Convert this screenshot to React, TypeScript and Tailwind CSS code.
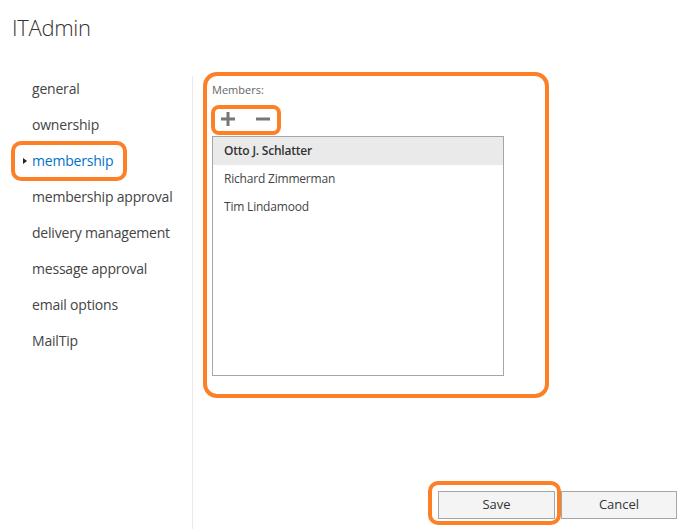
import React from 'react';

const navItems = [
  'general',
  'ownership',
  'membership',
  'membership approval',
  'delivery management',
  'message approval',
  'email options',
  'MailTip',
];

const members = ['Otto J. Schlatter', 'Richard Zimmerman', 'Tim Lindamood'];

const App: React.FC = () => {
  return (
    <div className="relative w-[697px] h-[529px] overflow-hidden bg-white text-[#333] font-['Open_Sans',sans-serif]">
      {/* Title */}
      <h1 className="h-[71px] pl-[12px] pt-[12px] text-[22px] font-light leading-[30px] tracking-[-0.3px] text-[#333]">ITAdmin</h1>

      <div className="flex h-[458px]">
        {/* Left nav */}
        <ul className="w-[192px] pl-[32px]">
          {navItems.map((item) => (
            <li
              key={item}
              className={`relative h-[36px] leading-[36px] text-[14px] tracking-[-0.2px] ${
                item === 'membership' ? 'text-[#0072c6]' : 'text-[#444]'
              }`}
            >
              {item === 'membership' && (
                <span className="absolute left-[-9px] top-[15px] w-0 h-0 border-y-[3.5px] border-y-transparent border-l-[4px] border-l-[#222]" />
              )}
              {item}
            </li>
          ))}
        </ul>

        {/* Right content */}
        <div className="flex-1 flex flex-col border-l border-[#eaeaea] mt-[5px]">
          <div className="pl-[19px] pt-[6px]">
            <div className="text-[11px] leading-[16px] text-[#666]">Members:</div>
            <div className="flex items-center gap-[19px] h-[26px] mt-[8px] pl-[8px]">
              <svg width="16" height="16" viewBox="0 0 16 16">
                <path d="M8 1v14M1 8h14" stroke="#777" strokeWidth="3" />
              </svg>
              <svg width="16" height="16" viewBox="0 0 16 16">
                <path d="M1 8h14" stroke="#777" strokeWidth="3" />
              </svg>
            </div>
            <div className="mt-[4px] w-[292px] h-[240px] border border-[#a6a6a6]">
              {members.map((m, i) => (
                <div
                  key={m}
                  className={`h-[28px] leading-[28px] pl-[11px] text-[12px] tracking-[-0.2px] ${
                    i === 0 ? 'bg-[#eaeaea] font-semibold text-[#333]' : 'text-[#444]'
                  }`}
                >
                  {m}
                </div>
              ))}
            </div>
          </div>

          <div className="flex-1" />

          {/* Footer buttons */}
          <div className="flex justify-end gap-[6px] pr-[20px] pb-[10px]">
            <button className="w-[117px] h-[28px] border border-[#a6a6a6] bg-[#f4f4f4] text-[13px] text-[#333]">
              Save
            </button>
            <button className="w-[116px] h-[28px] border border-[#a6a6a6] bg-[#f4f4f4] text-[13px] text-[#333]">
              Cancel
            </button>
          </div>
        </div>
      </div>

      {/* Orange annotation overlays */}
      <div className="absolute left-[11px] top-[141px] w-[116px] h-[40px] border-[4px] border-[#fd8027] rounded-[10px] pointer-events-none" />
      <div className="absolute left-[203px] top-[72px] w-[346px] h-[326px] border-[4px] border-[#fd8027] rounded-[14px] pointer-events-none" />
      <div className="absolute left-[211px] top-[105px] w-[70px] h-[30px] border-[4px] border-[#fd8027] rounded-[8px] pointer-events-none" />
      <div className="absolute left-[428px] top-[481px] w-[133px] h-[44px] border-[4px] border-[#fd8027] rounded-[10px] pointer-events-none" />
    </div>
  );
};

export default App;
